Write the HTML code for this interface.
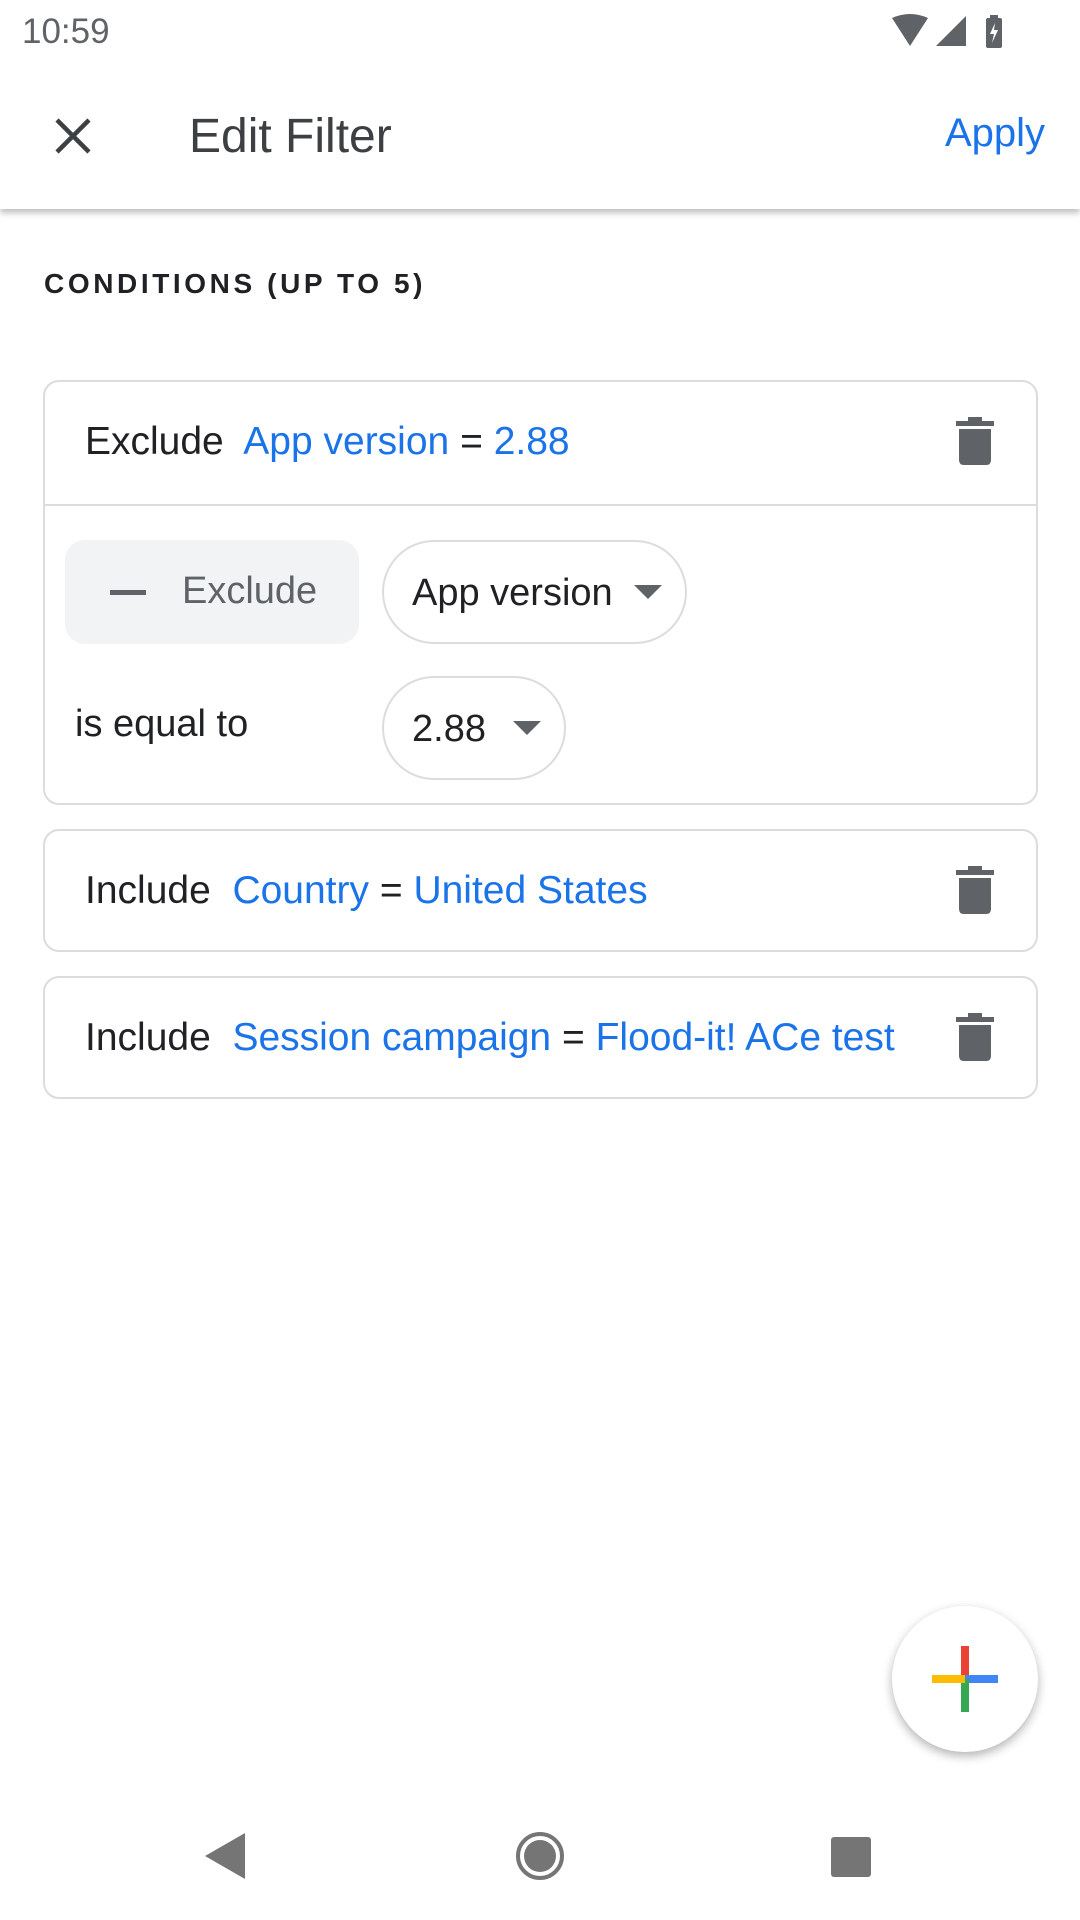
<!DOCTYPE html>
<html><head><meta charset="utf-8"><style>
body{margin:0;width:1080px;height:1920px;background:#fff;font-family:"Liberation Sans",sans-serif;position:relative;overflow:hidden}
.a{position:absolute;white-space:nowrap}
.card{position:absolute;left:43px;width:995px;border:2px solid #dadce0;border-radius:16px;box-sizing:border-box}
.row{position:absolute;left:40px;font-size:39px;color:#202124;transform:translateY(-50%)}
.b{color:#1a73e8}
</style></head><body>
<div class="a" style="left:0;top:0;width:1080px;height:209px;box-shadow:0 4px 6px rgba(0,0,0,0.25);background:#fff"></div>
<div class="a" style="left:22px;top:12px;font-size:35px;color:#5f6368">10:59</div>
<svg class="a" style="left:890px;top:14px" width="120" height="36" viewBox="0 0 120 36">
<path d="M2 4 Q20 -4 38 4 L20 32 Z" fill="#5f6368"/>
<path d="M46 32 L76 2 L76 32 Z" fill="#5f6368"/>
<rect x="96" y="4" width="16" height="30" rx="2" fill="#5f6368"/><rect x="100" y="1" width="8" height="4" fill="#5f6368"/>
<path d="M105 9 L100 20 L104 20 L102 29 L108 16 L104 16 Z" fill="#fff"/>
</svg>
<svg class="a" style="left:54px;top:117px" width="38" height="38" viewBox="0 0 38 38"><path d="M3 3 L35 35 M35 3 L3 35" stroke="#3c4043" stroke-width="4.5"/></svg>
<div class="a" style="left:189px;top:109px;font-size:48px;color:#3c4043">Edit Filter</div>
<div class="a" style="right:35px;top:111px;font-size:40px;color:#1a73e8">Apply</div>
<div class="a" style="left:44px;top:268px;font-size:28px;letter-spacing:3.6px;color:#202124;font-weight:bold">CONDITIONS (UP TO 5)</div>

<div class="card" style="top:380px;height:425px">
 <div class="row" style="top:60px">Exclude&nbsp; <span class="b">App version</span> = <span class="b">2.88</span></div>
 <div style="position:absolute;left:0;right:0;top:122px;height:2px;background:#dadce0"></div>
 <div style="position:absolute;left:20px;top:158px;width:294px;height:104px;background:#f1f3f4;border-radius:20px"></div>
 <div style="position:absolute;left:65px;top:208px;width:36px;height:5px;background:#5f6368"></div>
 <div class="a" style="left:137px;top:188px;font-size:38px;color:#5f6368">Exclude</div>
 <div style="position:absolute;left:337px;top:158px;width:305px;height:104px;border:2px solid #dadce0;border-radius:52px;box-sizing:border-box"></div>
 <div class="a" style="left:367px;top:190px;font-size:38px;color:#202124">App version</div>
 <svg class="a" style="left:589px;top:203px" width="28" height="14"><path d="M0 0 L28 0 L14 14Z" fill="#5f6368"/></svg>
 <div class="a" style="left:30px;top:321px;font-size:38px;color:#202124">is equal to</div>
 <div style="position:absolute;left:337px;top:294px;width:184px;height:104px;border:2px solid #dadce0;border-radius:52px;box-sizing:border-box"></div>
 <div class="a" style="left:367px;top:326px;font-size:38px;color:#202124">2.88</div>
 <svg class="a" style="left:468px;top:339px" width="28" height="14"><path d="M0 0 L28 0 L14 14Z" fill="#5f6368"/></svg>
</div>
<div class="card" style="top:829px;height:123px"><div class="row" style="top:60px">Include&nbsp; <span class="b">Country</span> = <span class="b">United States</span></div></div>
<div class="card" style="top:976px;height:123px"><div class="row" style="top:60px">Include&nbsp; <span class="b">Session campaign</span> = <span class="b">Flood-it! ACe test</span></div></div>

<svg class="a" style="left:956px;top:417px" width="38" height="48" viewBox="0 0 38 48"><rect x="0" y="4" width="38" height="5" fill="#5f6368"/><rect x="12" y="0" width="14" height="6" fill="#5f6368"/><path d="M3 12 H35 V43 Q35 48 30 48 H8 Q3 48 3 43Z" fill="#5f6368"/></svg>
<svg class="a" style="left:956px;top:866px" width="38" height="48" viewBox="0 0 38 48"><rect x="0" y="4" width="38" height="5" fill="#5f6368"/><rect x="12" y="0" width="14" height="6" fill="#5f6368"/><path d="M3 12 H35 V43 Q35 48 30 48 H8 Q3 48 3 43Z" fill="#5f6368"/></svg>
<svg class="a" style="left:956px;top:1013px" width="38" height="48" viewBox="0 0 38 48"><rect x="0" y="4" width="38" height="5" fill="#5f6368"/><rect x="12" y="0" width="14" height="6" fill="#5f6368"/><path d="M3 12 H35 V43 Q35 48 30 48 H8 Q3 48 3 43Z" fill="#5f6368"/></svg>

<div class="a" style="left:892px;top:1606px;width:146px;height:146px;border-radius:50%;background:#fff;box-shadow:0 4px 10px rgba(0,0,0,0.3)"></div>
<svg class="a" style="left:932px;top:1646px" width="66" height="66" viewBox="0 0 66 66">
<rect x="29" y="0" width="8" height="33" fill="#ea4335"/><rect x="33" y="29" width="33" height="8" fill="#4285f4"/>
<rect x="29" y="33" width="8" height="33" fill="#34a853"/><rect x="0" y="29" width="33" height="8" fill="#fbbc04"/>
</svg>
<svg class="a" style="left:205px;top:1833px" width="42" height="46"><path d="M40 0 V46 L0 23Z" fill="#757575"/></svg>
<svg class="a" style="left:515px;top:1831px" width="50" height="50"><circle cx="25" cy="25" r="22" fill="none" stroke="#757575" stroke-width="4"/><circle cx="25" cy="25" r="16" fill="#757575"/></svg>
<div class="a" style="left:831px;top:1837px;width:40px;height:40px;background:#757575;border-radius:3px"></div>
</body></html>
